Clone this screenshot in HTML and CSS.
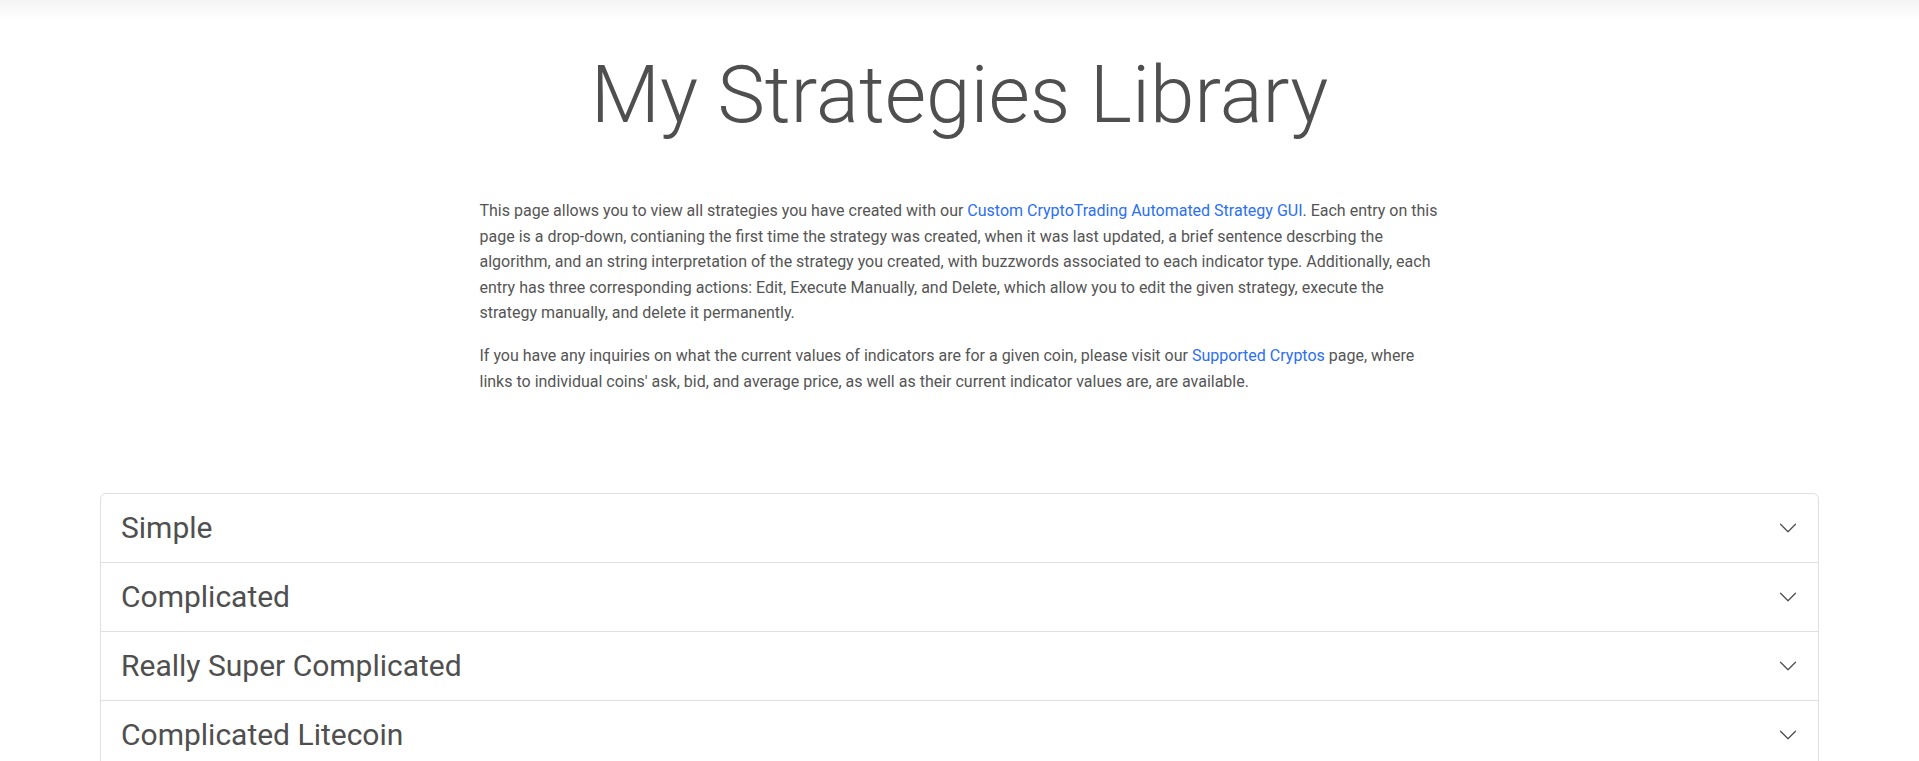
FILE: index.html
```html
<!DOCTYPE html>
<html lang="en">
<head>
<meta charset="utf-8">
<title>My Strategies Library</title>
<link rel="stylesheet" href="styles.css">
</head>
<body>
<div class="top-shade"></div>
<main class="page">
  <h1 class="title">My Strategies Library</h1>
  <section class="intro">
    <p>This page allows you to view all strategies you have created with our <a href="#">Custom CryptoTrading Automated Strategy GUI</a>. Each entry on this page is a drop-down, contianing the first time the strategy was created, when it was last updated, a brief sentence descrbing the algorithm, and an string interpretation of the strategy you created, with buzzwords associated to each indicator type. Additionally, each entry has three corresponding actions: Edit, Execute Manually, and Delete, which allow you to edit the given strategy, execute the strategy manually, and delete it permanently.</p>
    <p>If you have any inquiries on what the current values of indicators are for a given coin, please visit our <a href="#">Supported Cryptos</a> page, where links to individual coins' ask, bid, and average price, as well as their current indicator values are, are available.</p>
  </section>
  <div class="accordion">
    <div class="acc-item">
      <button class="acc-btn" type="button"><span>Simple</span>
        <svg class="chev" viewBox="0 0 16 16" fill="none"><path d="M2 5L8 11L14 5"/></svg>
      </button>
    </div>
    <div class="acc-item">
      <button class="acc-btn" type="button"><span>Complicated</span>
        <svg class="chev" viewBox="0 0 16 16" fill="none"><path d="M2 5L8 11L14 5"/></svg>
      </button>
    </div>
    <div class="acc-item">
      <button class="acc-btn" type="button"><span>Really Super Complicated</span>
        <svg class="chev" viewBox="0 0 16 16" fill="none"><path d="M2 5L8 11L14 5"/></svg>
      </button>
    </div>
    <div class="acc-item">
      <button class="acc-btn" type="button"><span>Complicated Litecoin</span>
        <svg class="chev" viewBox="0 0 16 16" fill="none"><path d="M2 5L8 11L14 5"/></svg>
      </button>
    </div>
  </div>
</main>
</body>
</html>
```

FILE: styles.css
```css
* { box-sizing: border-box; }

body {
  margin: 0;
  background: #fff;
  color: #4f4f4f;
  font-family: Roboto, "Liberation Sans", sans-serif;
}

.top-shade {
  height: 20px;
  background: linear-gradient(to bottom, #f4f4f4, #ffffff);
}

.page {
  padding-top: 27px;
}

.title {
  margin: 0 0 55px;
  text-align: center;
  font-size: 80px;
  font-weight: 300;
  line-height: 96px;
  color: #4f4f4f;
}

.intro {
  max-width: 960px;
  margin: 0 auto;
  font-size: 16px;
  line-height: 25.6px;
  color: #555;
}

.intro p {
  margin: 0 0 17px;
}

.intro a {
  color: #2b6ff3;
  text-decoration: none;
}

.accordion {
  margin: 99px 100px 0;
  border: 1px solid #e0e0e0;
  border-radius: 6px;
}

.acc-item + .acc-item {
  border-top: 1px solid #e0e0e0;
}

.acc-btn {
  display: flex;
  align-items: center;
  justify-content: space-between;
  width: 100%;
  padding: 16px 20px;
  border: 0;
  background: transparent;
  font-family: inherit;
  font-size: 30px;
  line-height: 36px;
  font-weight: 400;
  color: #4f4f4f;
  text-align: left;
  cursor: pointer;
}

.chev {
  width: 20px;
  height: 20px;
  flex-shrink: 0;
  stroke: #4f4f4f;
  stroke-width: 1;
  stroke-linecap: round;
  stroke-linejoin: round;
}
```
